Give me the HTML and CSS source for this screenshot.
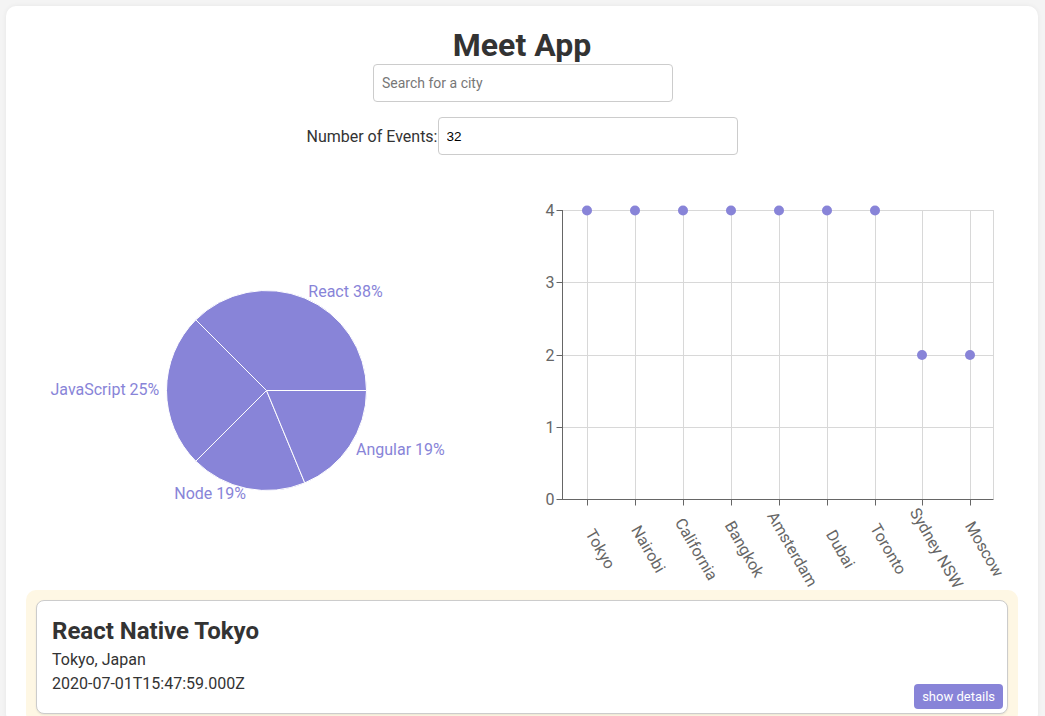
FILE: index.html
```html
<!DOCTYPE html>
<html lang="en">
<head>
<meta charset="utf-8">
<title>Meet App</title>
<link rel="stylesheet" href="styles.css">
</head>
<body>
<div class="app">
  <h1 class="title">Meet App</h1>
  <div class="city-search">
    <input class="city" type="text" placeholder="Search for a city">
  </div>
  <div class="number-of-events">
    <label class="events-label" for="num">Number of Events:</label>
    <input class="number" id="num" type="text" value="32">
  </div>
  <div class="charts">
    <svg class="chart" width="496" height="420" viewBox="0 0 496 420">
      <g class="slices">
        <path d="M240.5 220.5 L340.5 220.5 A100 100 0 0 0 169.79 149.79 Z"/>
        <path d="M240.5 220.5 L169.79 149.79 A100 100 0 0 0 169.79 291.21 Z"/>
        <path d="M240.5 220.5 L169.79 291.21 A100 100 0 0 0 278.77 312.89 Z"/>
        <path d="M240.5 220.5 L278.77 312.89 A100 100 0 0 0 340.5 220.5 Z"/>
      </g>
      <g class="pie-labels">
        <text x="282.3" y="126.5" text-anchor="start">React 38%</text>
        <text x="133.3" y="224.5" text-anchor="end">JavaScript 25%</text>
        <text x="220" y="329" text-anchor="end">Node 19%</text>
        <text x="330" y="284.7" text-anchor="start">Angular 19%</text>
      </g>
    </svg>
    <svg class="chart" width="496" height="420" viewBox="0 0 496 420">
      <g class="grid">
        <line x1="40.5" y1="40.5" x2="471.5" y2="40.5"/>
        <line x1="40.5" y1="112.5" x2="471.5" y2="112.5"/>
        <line x1="40.5" y1="185.5" x2="471.5" y2="185.5"/>
        <line x1="40.5" y1="257.5" x2="471.5" y2="257.5"/>
        <line x1="65.5" y1="40" x2="65.5" y2="329"/>
        <line x1="113.5" y1="40" x2="113.5" y2="329"/>
        <line x1="161.5" y1="40" x2="161.5" y2="329"/>
        <line x1="209.5" y1="40" x2="209.5" y2="329"/>
        <line x1="257.5" y1="40" x2="257.5" y2="329"/>
        <line x1="305.5" y1="40" x2="305.5" y2="329"/>
        <line x1="353.5" y1="40" x2="353.5" y2="329"/>
        <line x1="400.5" y1="40" x2="400.5" y2="329"/>
        <line x1="448.5" y1="40" x2="448.5" y2="329"/>
        <line x1="471.5" y1="40" x2="471.5" y2="329"/>
      </g>
      <g class="axis">
        <line x1="40.5" y1="40" x2="40.5" y2="330"/>
        <line x1="40" y1="329.5" x2="471.5" y2="329.5"/>
        <line x1="34.5" y1="40.5" x2="40.5" y2="40.5"/>
        <line x1="34.5" y1="112.5" x2="40.5" y2="112.5"/>
        <line x1="34.5" y1="185.5" x2="40.5" y2="185.5"/>
        <line x1="34.5" y1="257.5" x2="40.5" y2="257.5"/>
        <line x1="34.5" y1="329.5" x2="40.5" y2="329.5"/>
        <line x1="65.5" y1="329.5" x2="65.5" y2="335.5"/>
        <line x1="113.5" y1="329.5" x2="113.5" y2="335.5"/>
        <line x1="161.5" y1="329.5" x2="161.5" y2="335.5"/>
        <line x1="209.5" y1="329.5" x2="209.5" y2="335.5"/>
        <line x1="257.5" y1="329.5" x2="257.5" y2="335.5"/>
        <line x1="305.5" y1="329.5" x2="305.5" y2="335.5"/>
        <line x1="353.5" y1="329.5" x2="353.5" y2="335.5"/>
        <line x1="400.5" y1="329.5" x2="400.5" y2="335.5"/>
        <line x1="448.5" y1="329.5" x2="448.5" y2="335.5"/>
      </g>
      <g class="y-labels">
        <text x="32.5" y="46">4</text>
        <text x="32.5" y="118">3</text>
        <text x="32.5" y="191">2</text>
        <text x="32.5" y="263">1</text>
        <text x="32.5" y="335">0</text>
      </g>
      <g class="x-labels">
        <text transform="translate(78.5 379) rotate(60)" dy="0.35em">Tokyo</text>
        <text transform="translate(126.5 379) rotate(60)" dy="0.35em">Nairobi</text>
        <text transform="translate(174.5 379) rotate(60)" dy="0.35em">California</text>
        <text transform="translate(222.5 379) rotate(60)" dy="0.35em">Bangkok</text>
        <text transform="translate(270.5 379) rotate(60)" dy="0.35em">Amsterdam</text>
        <text transform="translate(318.5 379) rotate(60)" dy="0.35em">Dubai</text>
        <text transform="translate(366.5 379) rotate(60)" dy="0.35em">Toronto</text>
        <text transform="translate(414.5 378) rotate(60)" dy="0.35em">Sydney NSW</text>
        <text transform="translate(462.5 379) rotate(60)" dy="0.35em">Moscow</text>
      </g>
      <g class="dots">
        <circle cx="65" cy="40.5" r="5"/>
        <circle cx="113" cy="40.5" r="5"/>
        <circle cx="161" cy="40.5" r="5"/>
        <circle cx="209" cy="40.5" r="5"/>
        <circle cx="257" cy="40.5" r="5"/>
        <circle cx="305" cy="40.5" r="5"/>
        <circle cx="353" cy="40.5" r="5"/>
        <circle cx="400" cy="185" r="5"/>
        <circle cx="448" cy="185" r="5"/>
      </g>
    </svg>
  </div>
  <ul class="event-list">
    <li class="event">
      <h2 class="event-title">React Native Tokyo</h2>
      <p class="event-line">Tokyo, Japan</p>
      <p class="event-line event-date">2020-07-01T15:47:59.000Z</p>
      <button class="details-btn" type="button">show details</button>
    </li>
  </ul>
</div>
</body>
</html>
```
FILE: styles.css
```css
html, body {
  margin: 0;
}
body {
  background: #f4f4f4;
  font-family: Roboto, "Liberation Sans", sans-serif;
  color: #333;
  padding: 6px 7px 0 6px;
  overflow: hidden;
}
.app {
  background: #fff;
  border-radius: 10px;
  padding: 20px 20px 0;
  box-shadow: 0 0 5px rgba(0, 0, 0, 0.06);
}
.title {
  margin: 0;
  font-size: 32px;
  line-height: 38px;
  font-weight: 700;
  text-align: center;
  color: #333;
}
.city-search {
  display: flex;
  justify-content: center;
  padding-left: 2px;
}
.city, .number {
  box-sizing: border-box;
  width: 300px;
  height: 38px;
  border: 1px solid #ccc;
  border-radius: 4px;
  padding: 0 8px;
  margin: 0;
  outline: none;
  font-family: Roboto, "Liberation Sans", sans-serif;
  font-size: 14px;
  color: #000;
}
.city::placeholder {
  color: #777;
}
.number {
  font-family: "Liberation Sans", Arial, sans-serif;
  font-size: 13.5px;
}
.number-of-events {
  display: flex;
  justify-content: center;
  align-items: center;
  margin-top: 15px;
}
.events-label {
  font-size: 16px;
  color: #333;
}
.charts {
  display: flex;
  height: 420px;
  margin-top: 15px;
}
.chart {
  display: block;
  flex: none;
  overflow: visible;
  font-family: Roboto, "Liberation Sans", sans-serif;
}
.slices path {
  fill: #8884d8;
  stroke: #fff;
  stroke-width: 1;
}
.pie-labels text {
  fill: #8884d8;
  font-size: 16px;
}
.grid line {
  stroke: #d8d8d8;
  stroke-width: 1;
}
.axis line {
  stroke: #666;
  stroke-width: 1;
}
.y-labels text {
  fill: #666;
  font-size: 16px;
  text-anchor: end;
}
.x-labels text {
  fill: #666;
  font-size: 16px;
  text-anchor: middle;
}
.dots circle {
  fill: #8884d8;
}
.event-list {
  list-style: none;
  margin: 0;
  padding: 10px;
  background: #fef7e4;
  border-radius: 10px;
}
.event {
  position: relative;
  background: #fff;
  border: 1px solid #ccc;
  border-radius: 8px;
  padding: 16px 15px 17px;
  box-shadow: 0 1px 2px rgba(0, 0, 0, 0.08);
}
.event-title {
  margin: 0;
  font-size: 24px;
  line-height: 28px;
  font-weight: 700;
  color: #333;
}
.event-line {
  margin: 3px 0 0;
  font-size: 16px;
  line-height: 24px;
  color: #333;
}
.event-date {
  margin-top: 0;
}
.details-btn {
  position: absolute;
  right: 4px;
  bottom: 4px;
  height: 25px;
  padding: 0 8px;
  border: none;
  border-radius: 4px;
  background: #8884d8;
  color: #fff;
  font-family: Roboto, "Liberation Sans", sans-serif;
  font-size: 13px;
  line-height: 25px;
}
```
